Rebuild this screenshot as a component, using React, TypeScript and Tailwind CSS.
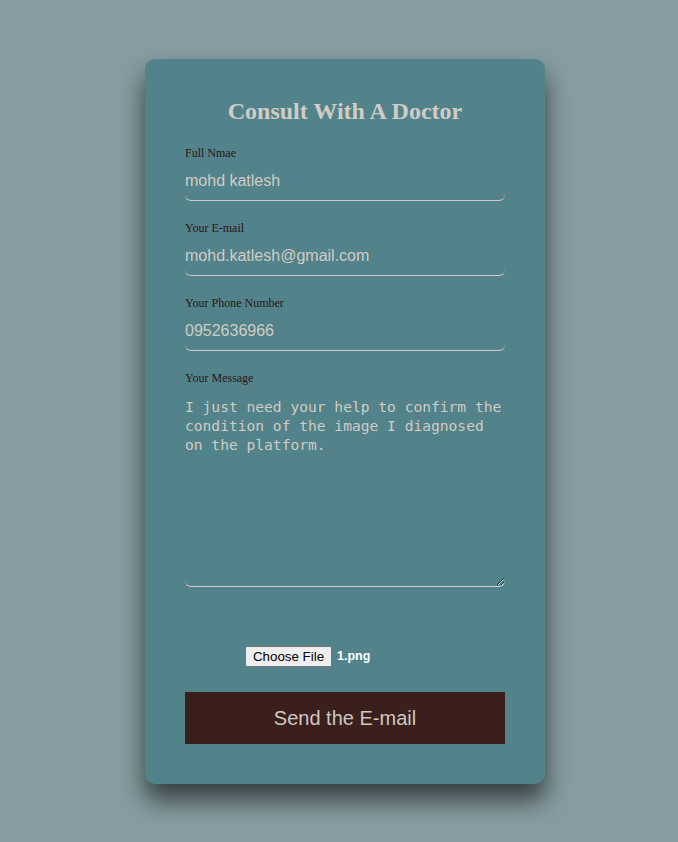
export default function App() {
  return (
    <div className="min-h-screen bg-[#869ca0] pt-[59px] pl-[145px] pb-[58px]">
      <div className="w-[400px] rounded-[10px] bg-[#52838a] px-10 pt-[34px] pb-10 shadow-[0_16px_24px_rgba(0,0,0,0.6)]">
        <h2 className="text-center font-['Liberation_Serif',serif] text-[24px] font-bold leading-[36px] text-[#d1ccc5]">
          Consult With A Doctor
        </h2>

        <form className="mt-[17px] flex flex-col">
          <Field label="Full Nmae" value="mohd katlesh" />
          <Field label="Your E-mail" value="mohd.katlesh@gmail.com" />
          <Field label="Your Phone Number" value="0952636966" />

          <label className="block h-[14px] font-['Liberation_Serif',serif] text-[12px] leading-[14px] text-[#2b1515]">
            Your Message
          </label>
          <textarea
            readOnly
            defaultValue="I just need your help to confirm the condition of the image I diagnosed on the platform."
            className="h-[202px] w-full resize-y rounded-b-[6px] border-b border-[#d1ccc5] bg-transparent pt-[12px] font-['DejaVu_Sans_Mono',monospace] text-[14.6px] leading-[19px] text-[#d1ccc5] outline-none"
          />

          <div className="mt-[59px] flex h-[21px] items-center pl-[60px] font-['Liberation_Sans',Arial,sans-serif]">
            <span className="flex h-[21px] w-[87px] items-center justify-center rounded-[2px] border border-[#767676] bg-[#efefef] text-[13.33px] text-black">
              Choose File
            </span>
            <span className="ml-[5px] text-[12.5px] font-bold text-white">1.png</span>
          </div>

          <button
            type="button"
            className="mt-[25px] h-[52px] w-full bg-[#3b1f1c] font-['Liberation_Sans',Arial,sans-serif] text-[20px] text-[#cdc8c1]"
          >
            Send the E-mail
          </button>
        </form>
      </div>
    </div>
  );
}

function Field({ label, value }: { label: string; value: string }) {
  return (
    <div className="mb-[20px]">
      <label className="block h-[14px] font-['Liberation_Serif',serif] text-[12px] leading-[14px] text-[#2b1515]">
        {label}
      </label>
      <input
        readOnly
        value={value}
        className="h-[41px] w-full rounded-b-[6px] border-b border-[#d1ccc5] bg-transparent pt-[2px] font-['Liberation_Sans',Arial,sans-serif] text-[16px] text-[#d1ccc5] outline-none"
      />
    </div>
  );
}
